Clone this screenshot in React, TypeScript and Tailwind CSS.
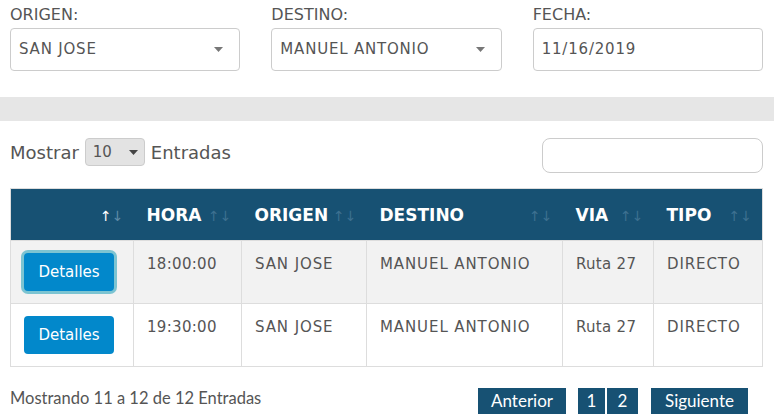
import React from 'react';

const rows = [
  { hora: '18:00:00', origen: 'SAN JOSE', destino: 'MANUEL ANTONIO', via: 'Ruta 27', tipo: 'DIRECTO', focused: true },
  { hora: '19:30:00', origen: 'SAN JOSE', destino: 'MANUEL ANTONIO', via: 'Ruta 27', tipo: 'DIRECTO', focused: false },
];

const columns = [
  { label: '', width: 'w-[123px]', active: true },
  { label: 'HORA', width: 'w-[108px]' },
  { label: 'ORIGEN', width: 'w-[125px]' },
  { label: 'DESTINO', width: 'w-[196px]' },
  { label: 'VIA', width: 'w-[91px]' },
  { label: 'TIPO', width: 'w-[109px]' },
];

function Caret({ className = '' }: { className?: string }) {
  return (
    <svg width="9" height="5" viewBox="0 0 9 5" className={className}>
      <path d="M0 0h9L4.5 5z" fill="currentColor" />
    </svg>
  );
}

function Field({ label, value, select }: { label: string; value: string; select?: boolean }) {
  return (
    <div>
      <div className="text-[16px] leading-[20px] text-[#555]">{label}</div>
      <div className="mt-[3px] flex h-[43px] items-center justify-between rounded-[4px] border border-[#ccc] bg-white pl-[8px] pr-[16px] text-[15px] tracking-[0.8px] text-[#555]">
        <span>{value}</span>
        {select && <Caret className="text-[#777]" />}
      </div>
    </div>
  );
}

function SortIcon({ active }: { active?: boolean }) {
  return (
    <span className="ml-auto flex text-[14px] font-normal leading-none">
      <span className={active ? 'text-white' : 'text-[#3d7090]'}>↑</span>
      <span className={active ? 'text-[#5f8aa6]' : 'text-[#3d7090]'}>↓</span>
    </span>
  );
}

export default function App() {
  return (
    <div className="min-h-[415px] w-[774px] bg-white font-['DejaVu_Sans',sans-serif] text-[#555]">
      <div className="grid grid-cols-3 gap-x-[31px] pl-[10px] pr-[11px] pt-[5px]">
        <Field label="ORIGEN:" value="SAN JOSE" select />
        <Field label="DESTINO:" value="MANUEL ANTONIO" select />
        <Field label="FECHA:" value="11/16/2019" />
      </div>

      <div className="mt-[26px] h-[24px] bg-[#e6e6e6]" />

      <div className="mt-[17px] flex items-start justify-between pl-[10px] pr-[11px]">
        <div className="flex h-[28px] items-center gap-[6px] text-[18px]">
          <span>Mostrar</span>
          <div className="flex h-[28px] w-[60px] items-center justify-between rounded-[4px] border border-[#ccc] bg-[#e3e3e3] pl-[7px] pr-[6px] text-[15px]">
            <span>10</span>
            <Caret className="text-[#444]" />
          </div>
          <span>Entradas</span>
        </div>
        <div className="h-[35px] w-[221px] rounded-[8px] border border-[#ccc] bg-white" />
      </div>

      <table className="ml-[10px] mt-[15px] w-[752px] table-fixed border-collapse border border-[#ddd]">
        <thead>
          <tr className="h-[52px] bg-[#175173]">
            {columns.map((c, i) => (
              <th key={i} className={`${c.width} pt-[3px] pl-[13px] pr-[10px] text-left text-[17px] font-bold text-white`}>
                <div className="flex items-center">
                  <span>{c.label}</span>
                  <SortIcon active={c.active} />
                </div>
              </th>
            ))}
          </tr>
        </thead>
        <tbody>
          {rows.map((r, i) => (
            <tr key={i} className={`h-[63px] ${i % 2 === 0 ? 'bg-[#f2f2f2]' : 'bg-white'}`}>
              <td className="border border-[#ddd] px-[13px] py-[12px] align-top">
                <button
                  className={`h-[38px] w-[90px] rounded-[4px] bg-[#0288cb] text-[15px] text-white ${
                    r.focused ? 'ring-[3px] ring-[#7cc4d2]' : ''
                  }`}
                >
                  Detalles
                </button>
              </td>
              {[
                { v: r.hora, upper: false },
                { v: r.origen, upper: true },
                { v: r.destino, upper: true },
                { v: r.via, upper: false },
                { v: r.tipo, upper: true },
              ].map((c, j) => (
                <td
                  key={j}
                  className={`border border-[#ddd] px-[13px] pt-[12px] align-top text-[15px] leading-[22px] ${
                    c.upper ? 'tracking-[0.9px]' : 'tracking-[0.3px]'
                  }`}
                >
                  {c.v}
                </td>
              ))}
            </tr>
          ))}
        </tbody>
      </table>

      <div className="mt-[21px] flex items-center justify-between pl-[10px] pr-[26px]">
        <span className="-mt-[5px] font-['Lato',sans-serif] text-[16.5px]">Mostrando 11 a 12 de 12 Entradas</span>
        <div className="flex items-center font-['Lato',sans-serif] text-[17px] text-white">
          <span className="flex h-[26px] w-[88px] items-center justify-center bg-[#175173]">Anterior</span>
          <span className="ml-[12px] flex h-[26px] w-[27px] items-center justify-center bg-[#175173]">1</span>
          <span className="ml-[2px] flex h-[26px] w-[31px] items-center justify-center bg-[#175173]">2</span>
          <span className="ml-[13px] flex h-[26px] w-[97px] items-center justify-center bg-[#175173]">Siguiente</span>
        </div>
      </div>
    </div>
  );
}
